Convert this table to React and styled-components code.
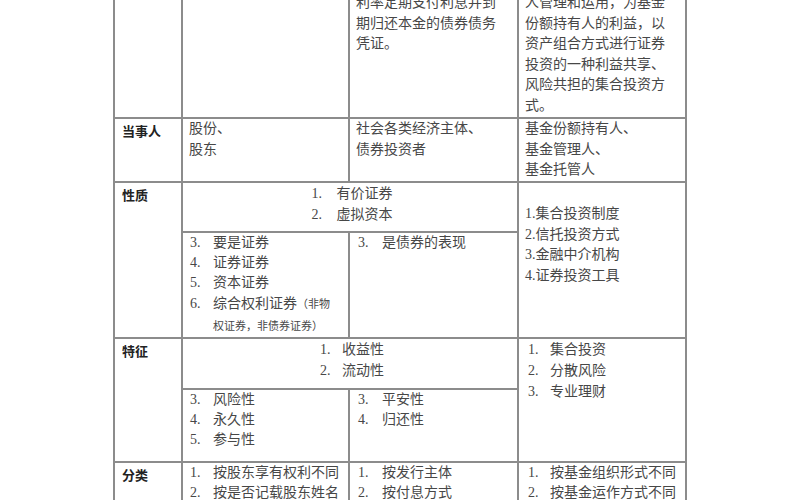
import styled, { createGlobalStyle } from "styled-components";

const GlobalStyle = createGlobalStyle`
    html, body {
        margin: 0;
        padding: 0;
        background: #fff;
    }
    body {
        font-family: "Liberation Serif", "Noto Sans CJK SC", serif;
        overflow: hidden;
    }
`;

const Page = styled.div`
    width: 800px;
    height: 500px;
    overflow: hidden;
    background: #fff;
    padding-left: 113px;
    box-sizing: border-box;
`;

const Sheet = styled.table`
    margin-top: -50px;
    border-collapse: collapse;
    table-layout: fixed;
    width: 574px;
    color: #474747;
    font-size: 14px;
    line-height: 20.5px;
`;

const Row = styled.tr`
    height: ${(p) => p.$h}px;
`;

const Label = styled.th`
    border: 2px solid #8c8c8c;
    vertical-align: top;
    text-align: left;
    padding: 2px 4px 0 7px;
    font-size: 13px;
    font-weight: bold;
    color: #222;
    font-family: "Noto Sans CJK SC", sans-serif;
`;

const Cell = styled.td`
    border: 2px solid #8c8c8c;
    vertical-align: top;
    padding: ${(p) => p.$pt ?? 0}px 4px 0 ${(p) => p.$pl ?? 6}px;
    text-align: ${(p) => (p.$center ? "center" : "left")};
`;

const Line = styled.div`
    white-space: nowrap;
`;

const CenterList = styled.div`
    display: inline-block;
    text-align: left;
    margin-left: 2px;
`;

const Item = styled.div`
    display: flex;
    line-height: ${(p) => p.$lh ?? 20}px;
    white-space: nowrap;
`;

const Num = styled.span`
    flex: none;
    width: ${(p) => p.$w ?? 23}px;
`;

const Small = styled.span`
    font-size: 11px;
`;

function NumList({ items, start = 1, w, lh }) {
    return items.map((text, i) => (
        <Item key={i} $lh={lh}>
            <Num $w={w}>{start + i}.</Num>
            <span>{text}</span>
        </Item>
    ));
}

const bondDef = [
    "债券是依照法定程序发",
    "行，约定在一定期限按",
    "利率定期支付利息并到",
    "期归还本金的债券债务",
    "凭证。",
];

const fundDef = [
    "将众多投资者的资金集",
    "中，由基金托管人托管，",
    "人管理和运用，为基金",
    "份额持有人的利益，以",
    "资产组合方式进行证券",
    "投资的一种利益共享、",
    "风险共担的集合投资方",
    "式。",
];

export default function App() {
    return (
        <Page>
            <GlobalStyle />
            <Sheet>
                <colgroup>
                    <col style={{ width: 68 }} />
                    <col style={{ width: 167 }} />
                    <col style={{ width: 169 }} />
                    <col style={{ width: 168 }} />
                </colgroup>
                <tbody>
                    <Row $h={167}>
                        <Label>定义</Label>
                        <Cell>
                            <Line>股份公司发行的</Line>
                            <Line>所有权凭证。</Line>
                        </Cell>
                        <Cell>
                            {bondDef.map((l) => (
                                <Line key={l}>{l}</Line>
                            ))}
                        </Cell>
                        <Cell>
                            {fundDef.map((l) => (
                                <Line key={l}>{l}</Line>
                            ))}
                        </Cell>
                    </Row>
                    <Row $h={64}>
                        <Label>当事人</Label>
                        <Cell>
                            <Line>股份、</Line>
                            <Line>股东</Line>
                        </Cell>
                        <Cell>
                            <Line>社会各类经济主体、</Line>
                            <Line>债券投资者</Line>
                        </Cell>
                        <Cell>
                            <Line>基金份额持有人、</Line>
                            <Line>基金管理人、</Line>
                            <Line>基金托管人</Line>
                        </Cell>
                    </Row>
                    <Row $h={50}>
                        <Label rowSpan={2}>性质</Label>
                        <Cell colSpan={2} $center>
                            <CenterList>
                                <NumList items={["有价证券", "虚拟资本"]} w={25} lh={21} />
                            </CenterList>
                        </Cell>
                        <Cell rowSpan={2} $pt={21}>
                            <Line>1.集合投资制度</Line>
                            <Line>2.信托投资方式</Line>
                            <Line>3.金融中介机构</Line>
                            <Line>4.证券投资工具</Line>
                        </Cell>
                    </Row>
                    <Row $h={106}>
                        <Cell $pl={7}>
                            <NumList start={3} items={["要是证券", "证券证券", "资本证券"]} />
                            <Item $lh={21}>
                                <Num>6.</Num>
                                <span>
                                    综合权利证券<Small>（非物</Small>
                                    <br />
                                    <Small>权证券，非债券证券）</Small>
                                </span>
                            </Item>
                        </Cell>
                        <Cell $pl={8}>
                            <NumList start={3} items={["是债券的表现"]} w={24} />
                        </Cell>
                    </Row>
                    <Row $h={51}>
                        <Label rowSpan={2}>特征</Label>
                        <Cell colSpan={2} $center>
                            <CenterList>
                                <NumList items={["收益性", "流动性"]} w={22} lh={21} />
                            </CenterList>
                        </Cell>
                        <Cell rowSpan={2} $pl={9}>
                            <NumList items={["集合投资", "分散风险", "专业理财"]} w={22} lh={21} />
                        </Cell>
                    </Row>
                    <Row $h={73}>
                        <Cell $pl={7}>
                            <NumList start={3} items={["风险性", "永久性", "参与性"]} />
                        </Cell>
                        <Cell $pl={8}>
                            <NumList start={3} items={["平安性", "归还性"]} w={24} />
                        </Cell>
                    </Row>
                    <Row $h={70}>
                        <Label>分类</Label>
                        <Cell $pl={7}>
                            <NumList items={["按股东享有权利不同", "按是否记载股东姓名"]} />
                        </Cell>
                        <Cell $pl={8}>
                            <NumList items={["按发行主体", "按付息方式"]} w={24} />
                        </Cell>
                        <Cell $pl={9}>
                            <NumList items={["按基金组织形式不同", "按基金运作方式不同"]} w={22} />
                        </Cell>
                    </Row>
                </tbody>
            </Sheet>
        </Page>
    );
}
